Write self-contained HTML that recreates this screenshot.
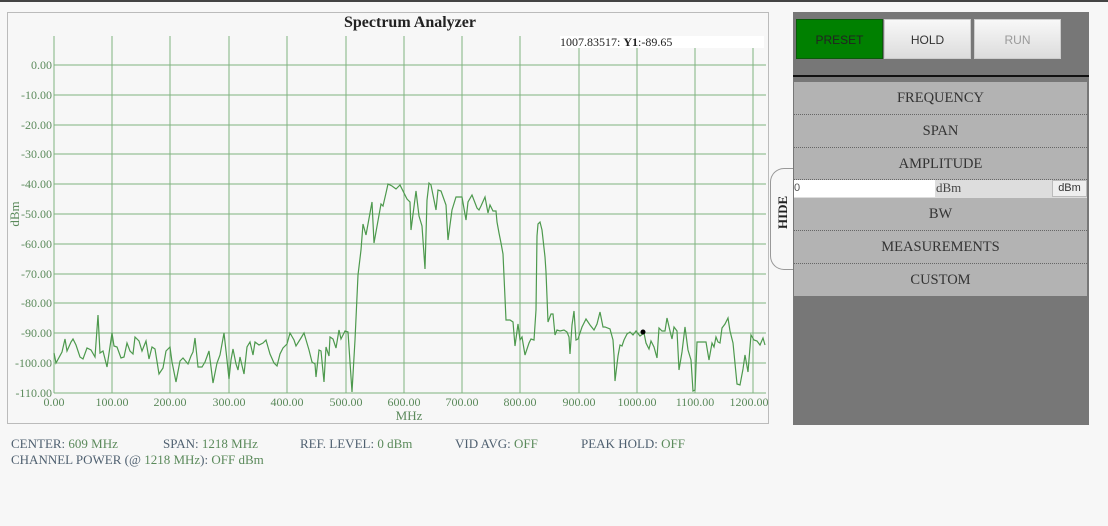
<!DOCTYPE html>
<html><head><meta charset="utf-8"><style>
body{margin:0;width:1108px;height:526px;background:#f7f7f7;font-family:"Liberation Serif",serif;position:relative;overflow:hidden}
.top{position:absolute;left:0;top:0;width:1108px;height:2px;background:#444}
.chart{position:absolute;left:7px;top:12px;width:762px;height:412px;border:1px solid #bbb;box-sizing:border-box}
.panel{position:absolute;left:793px;top:12px;width:296px;height:413px;background:#777}
.btn{position:absolute;top:7px;height:40px;width:87px;font-family:"Liberation Sans",sans-serif;font-size:12px;text-align:center;line-height:40px;background:linear-gradient(#f8f8f8,#dcdcdc);color:#333;border:1px solid #ccc;box-sizing:border-box}
.item{position:absolute;left:1px;width:293px;background:#b3b3b3;border-bottom:1px dotted #666;text-align:center;font-size:14.5px;color:#333;box-sizing:border-box}
.info{position:absolute;font-size:13px;color:#4f6070}
.info span{color:#5b8a5b}
</style></head><body>
<div class="top"></div>
<div class="chart"></div>
<svg style="position:absolute;left:0;top:0" width="780" height="430" font-family="Liberation Serif" font-size="12">
<text x="410" y="27" text-anchor="middle" font-size="16" font-weight="bold" fill="#222">Spectrum Analyzer</text>
<g stroke="#7fb37f" stroke-width="1">
<line x1="54" y1="36" x2="54" y2="393"/><line x1="112" y1="36" x2="112" y2="393"/><line x1="170" y1="36" x2="170" y2="393"/><line x1="229" y1="36" x2="229" y2="393"/><line x1="287" y1="36" x2="287" y2="393"/><line x1="346" y1="36" x2="346" y2="393"/><line x1="404" y1="36" x2="404" y2="393"/><line x1="462" y1="36" x2="462" y2="393"/><line x1="520" y1="36" x2="520" y2="393"/><line x1="579" y1="36" x2="579" y2="393"/><line x1="637" y1="36" x2="637" y2="393"/><line x1="695" y1="36" x2="695" y2="393"/><line x1="753" y1="36" x2="753" y2="393"/>
<line x1="54" y1="65" x2="766" y2="65"/><line x1="54" y1="95" x2="766" y2="95"/><line x1="54" y1="125" x2="766" y2="125"/><line x1="54" y1="154" x2="766" y2="154"/><line x1="54" y1="184" x2="766" y2="184"/><line x1="54" y1="214" x2="766" y2="214"/><line x1="54" y1="244" x2="766" y2="244"/><line x1="54" y1="274" x2="766" y2="274"/><line x1="54" y1="303" x2="766" y2="303"/><line x1="54" y1="333" x2="766" y2="333"/><line x1="54" y1="363" x2="766" y2="363"/><line x1="54" y1="393" x2="766" y2="393"/>
</g>
<rect x="560" y="36" width="204" height="12" fill="#fff"/>
<text x="560" y="46" font-size="12" fill="#222">1007.83517: <tspan font-weight="bold">Y1</tspan>:-89.65</text>
<g fill="#5b8a5b" text-anchor="end">
<text x="52" y="69">0.00</text><text x="52" y="99">-10.00</text><text x="52" y="129">-20.00</text><text x="52" y="158">-30.00</text><text x="52" y="188">-40.00</text><text x="52" y="218">-50.00</text><text x="52" y="248">-60.00</text><text x="52" y="278">-70.00</text><text x="52" y="307">-80.00</text><text x="52" y="337">-90.00</text><text x="52" y="367">-100.00</text><text x="52" y="397">-110.00</text>
</g>
<g fill="#5b8a5b" text-anchor="middle">
<text x="54" y="406">0.00</text><text x="112" y="406">100.00</text><text x="170" y="406">200.00</text><text x="229" y="406">300.00</text><text x="287" y="406">400.00</text><text x="346" y="406">500.00</text><text x="404" y="406">600.00</text><text x="462" y="406">700.00</text><text x="520" y="406">800.00</text><text x="579" y="406">900.00</text><text x="637" y="406">1000.00</text><text x="695" y="406">1100.00</text><text x="749" y="406">1200.00</text>
</g>
<text x="409" y="420" text-anchor="middle" font-size="13" fill="#5b8a5b">MHz</text>
<text transform="translate(19,214) rotate(-90)" text-anchor="middle" font-size="13" fill="#5b8a5b">dBm</text>
<polyline fill="none" stroke="#4d994d" stroke-width="1.2" points="54,353 56,363 62,352 65,339 67,351 71,342 73,339 76,345 80,357 83,359 87,348 91,350 95,357 98,315 100,353 103,351 107,367 112,333 114,346 117,347 121,358 124,357 127,343 130,351 133,354 135,337 139,341 142,351 146,341 149,359 152,347 155,349 159,374 163,368 166,351 170,347 172,362 176,382 180,361 183,358 188,364 191,356 193,352 195,338 198,367 202,367 205,362 209,351 213,383 217,363 220,355 224,333 227,360 229,379 231,360 233,349 236,364 238,370 240,357 244,374 247,347 250,342 253,355 255,342 259,345 263,343 266,340 270,354 274,363 277,366 280,354 283,348 287,344 290,333 294,340 296,346 301,338 304,333 309,350 312,362 315,364 316,377 319,350 321,351 324,382 326,347 329,356 330,337 333,339 336,348 339,330 341,339 345,331 348,332 352,392 355,340 358,275 361,250 363,224 366,235 372,202 374,243 381,204 383,206 386,193 388,184 392,186 396,189 400,185 402,189 407,199 410,202 411,230 416,191 419,216 422,226 425,269 427,200 429,183 431,185 434,200 436,210 438,190 441,191 446,205 448,240 452,210 456,197 459,197 462,197 466,220 468,202 472,195 477,208 479,210 481,206 485,197 488,213 490,205 493,211 496,211 497,222 499,233 501,243 503,254 506,320 510,320 513,322 515,346 518,324 520,340 522,337 525,355 529,343 531,339 534,340 536,310 537,236 538,224 540,222 542,230 545,257 546,272 548,322 551,314 553,314 555,335 557,330 560,331 564,330 567,332 569,337 570,354 572,325 574,311 576,340 578,339 582,327 584,323 586,319 590,325 594,330 597,324 600,312 603,327 605,327 610,329 613,340 614,355 615,381 618,356 620,345 622,346 624,340 627,334 630,332 633,335 636,331 640,336 644,333 646,343 649,349 651,341 654,347 657,358 659,328 662,331 665,331 667,318 670,331 672,339 674,327 677,331 679,370 682,352 685,327 688,350 691,360 693,391 695,390 697,342 700,342 704,342 706,342 709,360 712,343 714,347 716,337 718,342 720,343 722,328 725,324 728,318 730,331 733,343 737,384 740,385 743,369 745,355 748,372 751,335 754,340 757,341 760,345 763,338 765,345"/>
<circle cx="643" cy="332" r="2.5" fill="#000"/>
</svg>
<div style="position:absolute;left:770px;top:168px;width:30px;height:102px;border:1px solid #999;border-right:none;border-radius:14px 0 0 14px;background:#f7f7f7;box-sizing:border-box"></div>
<div style="position:absolute;left:773px;top:211px;width:20px;font-weight:bold;font-size:13px;color:#222;transform:rotate(-90deg);text-align:center">HIDE</div>
<div class="panel">
<div class="btn" style="left:3px;background:#008000;border-color:#0a5a0a;color:#222">PRESET</div>
<div class="btn" style="left:91px">HOLD</div>
<div class="btn" style="left:181px;color:#999">RUN</div>
<div style="position:absolute;left:0;top:63px;width:296px;height:2px;background:#111"></div>
<div class="item" style="top:70px;height:33px;line-height:33px">FREQUENCY</div>
<div class="item" style="top:103px;height:33px;line-height:33px">SPAN</div>
<div class="item" style="top:136px;height:32px;line-height:32px">AMPLITUDE</div>
<div style="position:absolute;left:1px;top:168px;width:293px;height:18px;background:#ddd">
<div style="position:absolute;left:0;top:0;width:141px;height:17px;background:#fff;font-family:'Liberation Sans',sans-serif;font-size:11px;line-height:17px;color:#555">0</div>
<div style="position:absolute;left:142px;top:0;font-size:13px;line-height:16px;color:#444">dBm</div>
<div style="position:absolute;left:258px;top:0;width:35px;height:17px;background:#eee;border:1px solid #bbb;box-sizing:border-box;font-family:'Liberation Sans',sans-serif;font-size:11px;text-align:center;line-height:15px;color:#333">dBm</div>
</div>
<div class="item" style="top:186px;height:33px;line-height:33px">BW</div>
<div class="item" style="top:219px;height:33px;line-height:33px">MEASUREMENTS</div>
<div class="item" style="top:252px;height:32px;line-height:32px;border-bottom:none">CUSTOM</div>
</div>
<div class="info" style="left:11px;top:436px">CENTER: <span>609 MHz</span></div>
<div class="info" style="left:163px;top:436px">SPAN: <span>1218 MHz</span></div>
<div class="info" style="left:300px;top:436px">REF. LEVEL: <span>0 dBm</span></div>
<div class="info" style="left:455px;top:436px">VID AVG: <span>OFF</span></div>
<div class="info" style="left:581px;top:436px">PEAK HOLD: <span>OFF</span></div>
<div class="info" style="left:11px;top:452px">CHANNEL POWER (@ <span>1218 MHz</span>): <span>OFF dBm</span></div>
</body></html>
